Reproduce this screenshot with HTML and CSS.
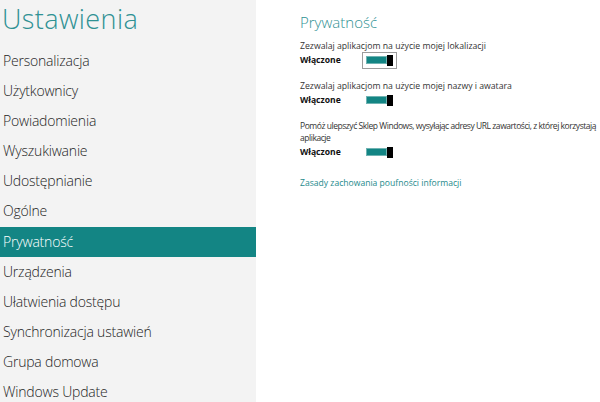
FILE: index.html
```html
<!DOCTYPE html>
<html lang="pl">
<head>
<meta charset="utf-8">
<title>Ustawienia</title>
<link rel="stylesheet" href="styles.css">
</head>
<body>
<div class="app">
  <nav class="sidebar">
    <h1 class="title">Ustawienia</h1>
    <ul class="menu">
      <li class="item">Personalizacja</li>
      <li class="item">Użytkownicy</li>
      <li class="item">Powiadomienia</li>
      <li class="item">Wyszukiwanie</li>
      <li class="item">Udostępnianie</li>
      <li class="item">Ogólne</li>
      <li class="item active">Prywatność</li>
      <li class="item">Urządzenia</li>
      <li class="item">Ułatwienia dostępu</li>
      <li class="item">Synchronizacja ustawień</li>
      <li class="item">Grupa domowa</li>
      <li class="item">Windows Update</li>
    </ul>
  </nav>
  <main class="content">
    <h2 class="heading">Prywatność</h2>
    <section class="setting">
      <p class="desc">Zezwalaj aplikacjom na użycie mojej lokalizacji</p>
      <div class="row">
        <span class="state">Włączone</span>
        <span class="toggle focus"><span class="track"></span><span class="thumb"></span></span>
      </div>
    </section>
    <section class="setting">
      <p class="desc">Zezwalaj aplikacjom na użycie mojej nazwy i awatara</p>
      <div class="row">
        <span class="state">Włączone</span>
        <span class="toggle"><span class="track"></span><span class="thumb"></span></span>
      </div>
    </section>
    <section class="setting">
      <p class="desc tight">Pomóż ulepszyć Sklep Windows, wysyłając adresy URL zawartości, z której korzystają aplikacje</p>
      <div class="row">
        <span class="state">Włączone</span>
        <span class="toggle"><span class="track"></span><span class="thumb"></span></span>
      </div>
    </section>
    <a class="link" href="#">Zasady zachowania poufności informacji</a>
  </main>
</div>
</body>
</html>
```
FILE: styles.css
```css
* { box-sizing: border-box; }
html, body { margin: 0; padding: 0; }
body {
  width: 600px;
  height: 402px;
  overflow: hidden;
  background: #ffffff;
  font-family: "Open Sans", "Noto Sans", "Liberation Sans", sans-serif;
}
.app {
  display: flex;
  height: 402px;
}
.sidebar {
  width: 256px;
  flex: none;
  background: #f3f3f3;
  display: flex;
  flex-direction: column;
  overflow: hidden;
}
.title {
  flex: none;
  margin: 0;
  height: 46px;
  padding-left: 2px;
  font-size: 27px;
  letter-spacing: 0.4px;
  font-weight: 300;
  line-height: 37px;
  color: #2f9193;
}
.menu {
  flex: none;
  list-style: none;
  margin: 0;
  padding: 0;
}
.item {
  height: 30.1px;
  line-height: 30px;
  padding-left: 3px;
  font-size: 14px;
  letter-spacing: -0.2px;
  font-weight: 300;
  color: #1e1e1e;
  white-space: nowrap;
}
.item.active {
  background: #138584;
  color: #ffffff;
}
.content {
  flex: 1;
  padding: 12px 0 0 44px;
  display: flex;
  flex-direction: column;
  align-items: flex-start;
}
.heading {
  margin: 0 0 8px 0;
  font-size: 15px;
  font-weight: 300;
  line-height: 20px;
  color: #2f9193;
}
.setting {
  margin-bottom: 12px;
}
.desc {
  margin: 0;
  width: 300px;
  font-family: "Open Sans", sans-serif;
  font-size: 8.7px;
  line-height: 12px;
  color: #333333;
}
.desc.tight {
  font-size: 8.5px;
  letter-spacing: -0.45px;
}
.row {
  display: flex;
  align-items: center;
  height: 16px;
}
.state {
  width: 62px;
  font-size: 8.6px;
  font-weight: 700;
  color: #111111;
}
.toggle {
  display: inline-flex;
  align-items: center;
  height: 17px;
  padding: 0 3px;
  border: 1px solid transparent;
}
.toggle.focus {
  border-color: #9c9c9c;
}
.track {
  width: 21px;
  height: 8px;
  background: #138584;
  border: 1px solid #6fb3b2;
}
.thumb {
  width: 6px;
  height: 11px;
  background: #000000;
}
.link {
  margin-top: 5px;
  font-size: 8.6px;
  line-height: 12px;
  color: #1e8a8c;
  text-decoration: none;
}
```
